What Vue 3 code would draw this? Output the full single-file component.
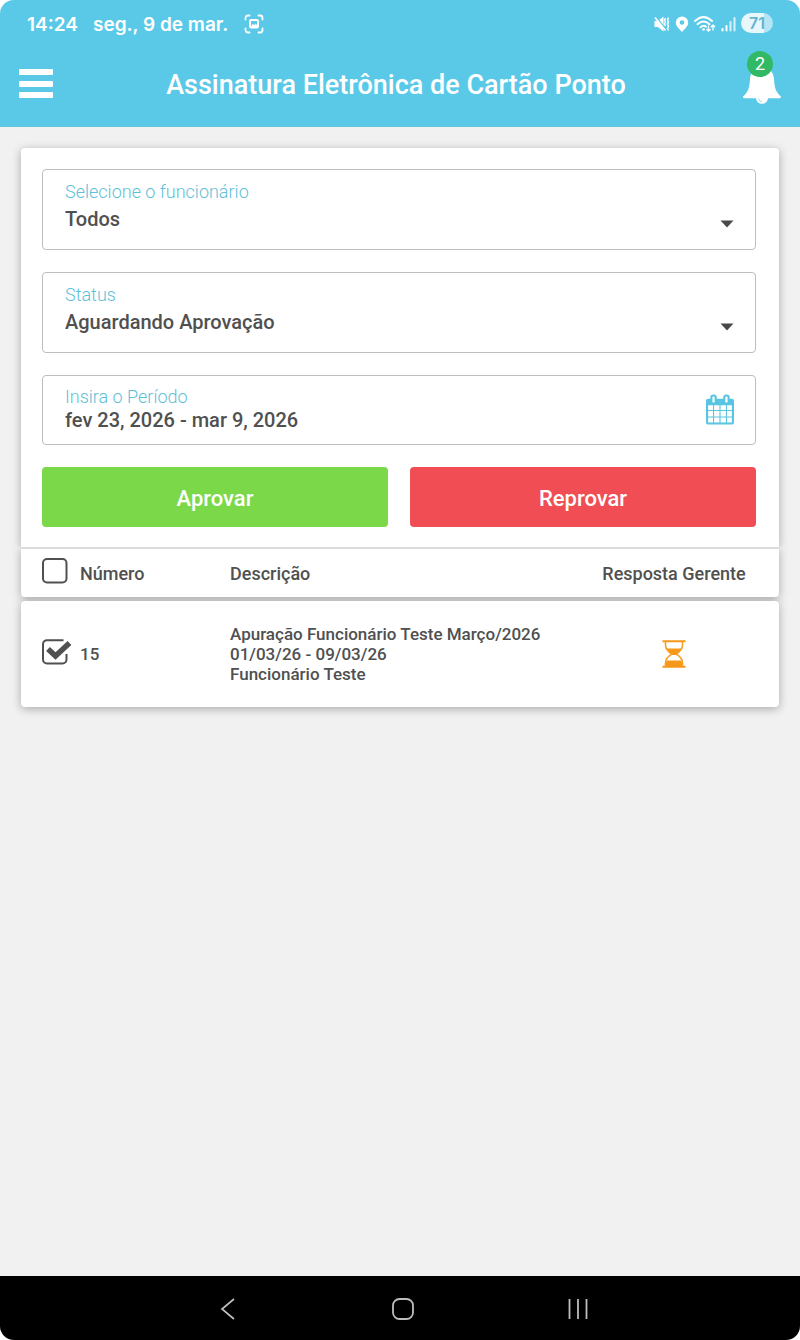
<script setup>
import { ref } from 'vue'

const employee = ref('Todos')
const status = ref('Aguardando Aprovação')
const period = ref('fev 23, 2026 - mar 9, 2026')
const allSelected = ref(false)
const rows = ref([
  {
    number: 15,
    title: 'Apuração Funcionário Teste Março/2026',
    range: '01/03/26 - 09/03/26',
    employee: 'Funcionário Teste',
    selected: true
  }
])
</script>

<template>
  <div class="screen">
    <div class="statusbar">
      <span class="clock">14:24</span>
      <span class="date">seg., 9 de mar.</span>
      <svg class="capture" width="20" height="20" viewBox="0 0 20 20" fill="none" stroke="#fff" stroke-width="1.8" stroke-linecap="round">
        <path d="M1.500 5.500V4A2.500 2.500 0 0 1 4 1.500h1.500M14.500 1.500H16A2.500 2.500 0 0 1 18.500 4v1.500M18.500 14.500V16a2.500 2.500 0 0 1-2.500 2.500h-1.500M5.500 18.500H4A2.500 2.500 0 0 1 1.500 16v-1.500" />
        <rect x="6" y="6" width="8" height="7.500" rx="1.200" stroke-width="2" />
        <path d="M7 13l1.500-3 2 1 1.500-1.500 1.500 3.500z" fill="#fff" stroke="none" />
      </svg>
      <div class="signals">
        <svg width="16" height="18" viewBox="0 0 16 18">
          <path d="M.5 6h3.500L9.500 1.500v15L4 12H.5z" fill="#fff" />
          <path d="M2.500 2.500l9.500 12" stroke="#5ac9e8" stroke-width="1.600" />
          <path d="M1 2.500l10.500 13" stroke="#fff" stroke-width="1.600" />
          <path d="M11.500 3l-1 2 1 2-1 2 1 2M14.500 2.500l-1 2.200 1 2.200-1 2.200 1 2.200-1 2.200 1 2" fill="none" stroke="#fff" stroke-width="1.500" />
        </svg>
        <svg width="14" height="18" viewBox="0 0 14 18">
          <path fill="#fff" fill-rule="evenodd" d="M7 1.500a6.200 6.200 0 0 1 6.200 6.200C13.200 11 10 13.500 7 17 4 13.500.8 11 .8 7.700A6.200 6.200 0 0 1 7 1.500zM7 5.200a2.300 2.300 0 1 0 0 4.600 2.300 2.300 0 0 0 0-4.600z" />
        </svg>
        <svg width="22" height="18" viewBox="0 0 22 18" fill="none" stroke="#fff" stroke-width="1.900" stroke-linecap="round">
          <path d="M1 6q8.500-8 17 0M3.500 9.200q6-5.400 12 0M6.500 12.200q3-2.500 5.500-.5" />
          <circle cx="9.500" cy="14.500" r="1.300" fill="#fff" stroke="none" />
          <path d="M14.500 11v5M12.800 14.500l1.700 1.700 1.700-1.700M19 15v-5M17.300 11.700l1.700-1.700 1.700 1.700" stroke-width="1.300" />
        </svg>
        <svg width="15" height="18" viewBox="0 0 15 18" stroke="#fff" stroke-width="2" stroke-linecap="round">
          <path d="M1.500 14v1.500M5.500 11v4.500" />
          <path d="M9.500 7v8.500M13.500 3v12.500" opacity=".75" />
        </svg>
        <span class="battery">71</span>
      </div>
    </div>

    <header class="appbar">
      <button class="icon-button" aria-label="Menu">
        <svg width="34" height="30" viewBox="0 0 34 30" fill="#fff">
          <rect y="0" width="34" height="6" rx="1" />
          <rect y="12" width="34" height="6" rx="1" />
          <rect y="23" width="34" height="6" rx="1" />
        </svg>
      </button>
      <h1>Assinatura Eletrônica de Cartão Ponto</h1>
      <button class="icon-button bell" aria-label="Notificações">
        <svg width="38" height="42" viewBox="0 0 38 42">
          <path fill="#fff" d="M19 2a3 3 0 0 1 3 3c6 1.500 8.500 5 9 11 .5 9 2 13.500 7 17.500 0 1-.8 1.800-1.500 1.800H25a6 5.500 0 0 1-12 0H1.500C.8 35.300 0 34.500 0 33.500 5 29.500 6.500 25 7 16c.5-6 3-9.500 9-11a3 3 0 0 1 3-3z" />
          <path d="M15.500 35.500a3.700 3.700 0 0 0 3.500 3.300" fill="none" stroke="#9bdcef" stroke-width="1" />
        </svg>
        <span class="badge">2</span>
      </button>
    </header>

    <main>
      <form class="panel" @submit.prevent>
        <div class="field">
          <label for="employee">Selecione o funcionário</label>
          <select id="employee" v-model="employee"><option>Todos</option></select>
          <svg class="caret" width="14" height="8" viewBox="0 0 14 8"><path d="M.5.5h13L7 7.500z" fill="#484848" /></svg>
        </div>
        <div class="field">
          <label for="status">Status</label>
          <select id="status" v-model="status"><option>Aguardando Aprovação</option></select>
          <svg class="caret" width="14" height="8" viewBox="0 0 14 8"><path d="M.5.5h13L7 7.500z" fill="#484848" /></svg>
        </div>
        <div class="field period">
          <label for="period">Insira o Período</label>
          <input id="period" v-model="period" type="text">
          <svg class="calendar" width="28" height="31" viewBox="0 0 1664 1792" fill="#5ac5e0">
            <path d="M128 1664h288v-288h-288v288zm352 0h320v-288h-320v288zm-352-352h288v-320h-288v320zm352 0h320v-320h-320v320zm-352-384h288v-288h-288v288zm736 736h320v-288h-320v288zm-384-736h320v-288h-320v288zm768 736h288v-288h-288v288zm-384-352h320v-320h-320v320zm-352-864v-288q0-13-9.500-22.500t-22.500-9.500h-64q-13 0-22.500 9.500t-9.500 22.500v288q0 13 9.500 22.500t22.500 9.500h64q13 0 22.500-9.500t9.500-22.500zm736 864h288v-320h-288v320zm-384-384h320v-288h-320v288zm384 0h288v-288h-288v288zm32-480v-288q0-13-9.500-22.500t-22.500-9.500h-64q-13 0-22.500 9.500t-9.500 22.500v288q0 13 9.500 22.500t22.500 9.500h64q13 0 22.500-9.500t9.500-22.500zm384-64v1280q0 52-38 90t-90 38h-1408q-52 0-90-38t-38-90v-1280q0-52 38-90t90-38h128v-96q0-66 47-113t113-47h64q66 0 113 47t47 113v96h384v-96q0-66 47-113t113-47h64q66 0 113 47t47 113v96h128q52 0 90 38t38 90z" />
          </svg>
        </div>
        <div class="actions">
          <button type="button" class="approve">Aprovar</button>
          <button type="button" class="reject">Reprovar</button>
        </div>
      </form>

      <table>
        <thead>
          <tr>
            <th class="pick">
              <span class="check">
                <input id="all" v-model="allSelected" type="checkbox">
                <svg width="30" height="26" viewBox="0 0 30 26" fill="none" stroke="#505050">
                  <rect x="1" y="1" width="23.500" height="23.500" rx="4" stroke-width="2" />
                  <path v-if="allSelected" d="M6 11l6 6L28 4" stroke-width="5" />
                </svg>
              </span>
              <label for="all">Número</label>
            </th>
            <th>Descrição</th>
            <th class="answer">Resposta Gerente</th>
          </tr>
        </thead>
        <tbody>
          <tr v-for="row in rows" :key="row.number">
            <td class="pick">
              <span class="check">
                <input :id="'row-' + row.number" v-model="row.selected" type="checkbox">
                <svg width="30" height="26" viewBox="0 0 30 26" fill="none" stroke="#505050">
                  <template v-if="row.selected">
                    <path d="M21.500 1.200H5A4 4 0 0 0 1 5v15.500a4 4 0 0 0 4 4h15.500a4 4 0 0 0 4-4V15" stroke-width="2" />
                    <path d="M6 10l7.500 7L27.500 4" stroke-width="5.500" />
                  </template>
                  <rect v-else x="1" y="1" width="23.500" height="23.500" rx="4" stroke-width="2" />
                </svg>
              </span>
              <label :for="'row-' + row.number">{{ row.number }}</label>
            </td>
            <td>
              <div>{{ row.title }}</div>
              <div>{{ row.range }}</div>
              <div>{{ row.employee }}</div>
            </td>
            <td class="answer">
              <svg width="24" height="28" viewBox="0 0 24 28" role="img" aria-label="Aguardando">
                <path d="M3.500 1v4c0 4.500 3 7 6.500 9-3.500 2-6.500 4.500-6.500 9v4M20.500 1v4c0 4.500-3 7-6.500 9 3.500 2 6.500 4.500 6.500 9v4" fill="none" stroke="#f7a128" stroke-width="1.600" />
                <path d="M4.500 8.500h15c-1 2.800-3 4.300-5.500 5.500v1h-4v-1C7.500 12.800 5.500 11.300 4.500 8.500zM3.500 26c0-2.500.5-4 1.500-5.500h14c1 1.500 1.500 3 1.500 5.500z" fill="#f5991b" />
                <path d="M.5.300h23v2H.5zM.5 25.700h23v2H.5z" fill="#f5991b" />
              </svg>
            </td>
          </tr>
        </tbody>
      </table>
    </main>

    <nav class="systembar">
      <button class="icon-button" aria-label="Voltar">
        <svg width="22" height="22" viewBox="0 0 22 22" fill="none" stroke="#bdbdbd" stroke-width="1.700"><path d="M17 1L5 11l12 10" /></svg>
      </button>
      <button class="icon-button" aria-label="Início">
        <svg width="22" height="22" viewBox="0 0 22 22" fill="none" stroke="#bdbdbd" stroke-width="1.800"><rect x="1" y="1" width="20" height="20" rx="6.500" /></svg>
      </button>
      <button class="icon-button" aria-label="Recentes">
        <svg width="22" height="22" viewBox="0 0 22 22" fill="none" stroke="#bdbdbd" stroke-width="1.800"><path d="M2.500 1v20M11 1v20M19.500 1v20" /></svg>
      </button>
    </nav>
  </div>
</template>

<style>
body {
  background: #fff;
}
</style>

<style scoped>
* {
  box-sizing: border-box;
}
.screen {
  display: flex;
  flex-direction: column;
  min-height: 100vh;
  overflow: hidden;
  border-radius: 14px;
  background: #f1f1f1;
  color: #505050;
  font-family: Roboto, "Liberation Sans", sans-serif;
  font-weight: 500;
}
button,
select,
input {
  margin: 0;
  padding: 0;
  border: 0;
  background: none;
  color: inherit;
  font: inherit;
}
svg {
  display: block;
}
.statusbar {
  display: flex;
  align-items: center;
  height: 48px;
  padding: 0 27px;
  background: #5ac9e8;
  color: #fff;
  font-family: Inter, Roboto, sans-serif;
  font-size: 19px;
  font-weight: 600;
}
.date {
  margin-left: 15px;
}
.capture {
  margin-left: 16px;
}
.signals {
  display: flex;
  align-items: center;
  gap: 5px;
  margin-left: auto;
}
.battery {
  width: 32px;
  margin-bottom: 2px;
  border-radius: 10px;
  background: linear-gradient(to right, #e8f7fc 71%, #b5e5f4 71%);
  color: #62b4cf;
  font-size: 16px;
  line-height: 20px;
  text-align: center;
}
.appbar {
  display: flex;
  align-items: center;
  justify-content: space-between;
  height: 79px;
  padding: 0 19px 6px;
  border-bottom: 1px solid #62c3da;
  background: #5ac9e8;
  color: #fff;
}
h1 {
  margin: 2px 4px 0 0;
  font-size: 27px;
  font-weight: 500;
}
.bell {
  position: relative;
}
.badge {
  position: absolute;
  top: -12px;
  left: 4px;
  width: 26px;
  border-radius: 13px;
  background: #32b966;
  font-size: 18px;
  font-weight: 400;
  line-height: 26px;
  text-align: center;
}
main {
  flex: 1;
  padding: 21px;
}
.panel {
  display: flex;
  flex-direction: column;
  gap: 22px;
  padding: 21px 23px 20px 21px;
  border-radius: 4px 4px 0 0;
  background: #fff;
  box-shadow: 0 2px 10px rgba(0, 0, 0, 0.3);
  clip-path: inset(-14px -14px 0 -14px);
}
.field {
  position: relative;
  display: flex;
  flex-direction: column;
  padding: 10px 22px 15px;
  border: 1px solid #bdbdbd;
  border-radius: 4px;
}
.field label {
  color: #5ebfd8;
  font-size: 18px;
  font-weight: 300;
  line-height: 24px;
}
.field select,
.field input {
  width: 100%;
  appearance: none;
  height: 30px;
  font-size: 20px;
  line-height: 30px;
}
.field.period {
  padding: 9px 22px 13px;
}
.field.period input {
  height: 22px;
  line-height: 22px;
}
.caret {
  position: absolute;
  right: 21px;
  bottom: 21px;
  pointer-events: none;
}
.calendar {
  position: absolute;
  right: 21px;
  top: 18px;
}
.actions {
  display: flex;
  gap: 22px;
}
.actions button {
  flex: 1;
  height: 60px;
  padding-top: 2px;
  border-radius: 4px;
  color: #fff;
  font-size: 22px;
}
.approve {
  background: #7ad849;
}
.reject {
  background: #f04e54;
}
table,
thead,
tbody {
  display: block;
}
tr {
  display: grid;
  grid-template-columns: 188px 1fr 144px;
  align-items: center;
  padding: 0 33px 0 21px;
  background: #fff;
}
th,
td {
  padding: 0;
  font-weight: 500;
  text-align: left;
}
thead tr {
  height: 50px;
  border-top: 2px solid #dcdcdc;
  border-radius: 0 0 4px 4px;
  box-shadow: 0 2px 10px rgba(0, 0, 0, 0.3);
  clip-path: inset(0 -14px -14px -14px);
  font-size: 18px;
}
tbody tr {
  margin-top: 4px;
  padding-top: 23px;
  padding-bottom: 23px;
  border-radius: 4px;
  box-shadow: 0 2px 10px rgba(0, 0, 0, 0.3);
  clip-path: inset(-4px -14px -14px -14px);
  font-size: 17px;
  line-height: 20px;
}
.pick {
  display: flex;
  align-items: center;
  gap: 8px;
}
.check {
  display: grid;
  padding-bottom: 4px;
}
.check > * {
  grid-area: 1 / 1;
}
.check input {
  appearance: none;
  width: 30px;
  height: 26px;
}
.check svg {
  pointer-events: none;
}
.answer {
  display: flex;
  justify-content: center;
  white-space: nowrap;
}
.systembar {
  display: flex;
  align-items: center;
  justify-content: center;
  gap: 153px;
  height: 64px;
  padding: 2px 0 0 5px;
  background: #000;
}
</style>
